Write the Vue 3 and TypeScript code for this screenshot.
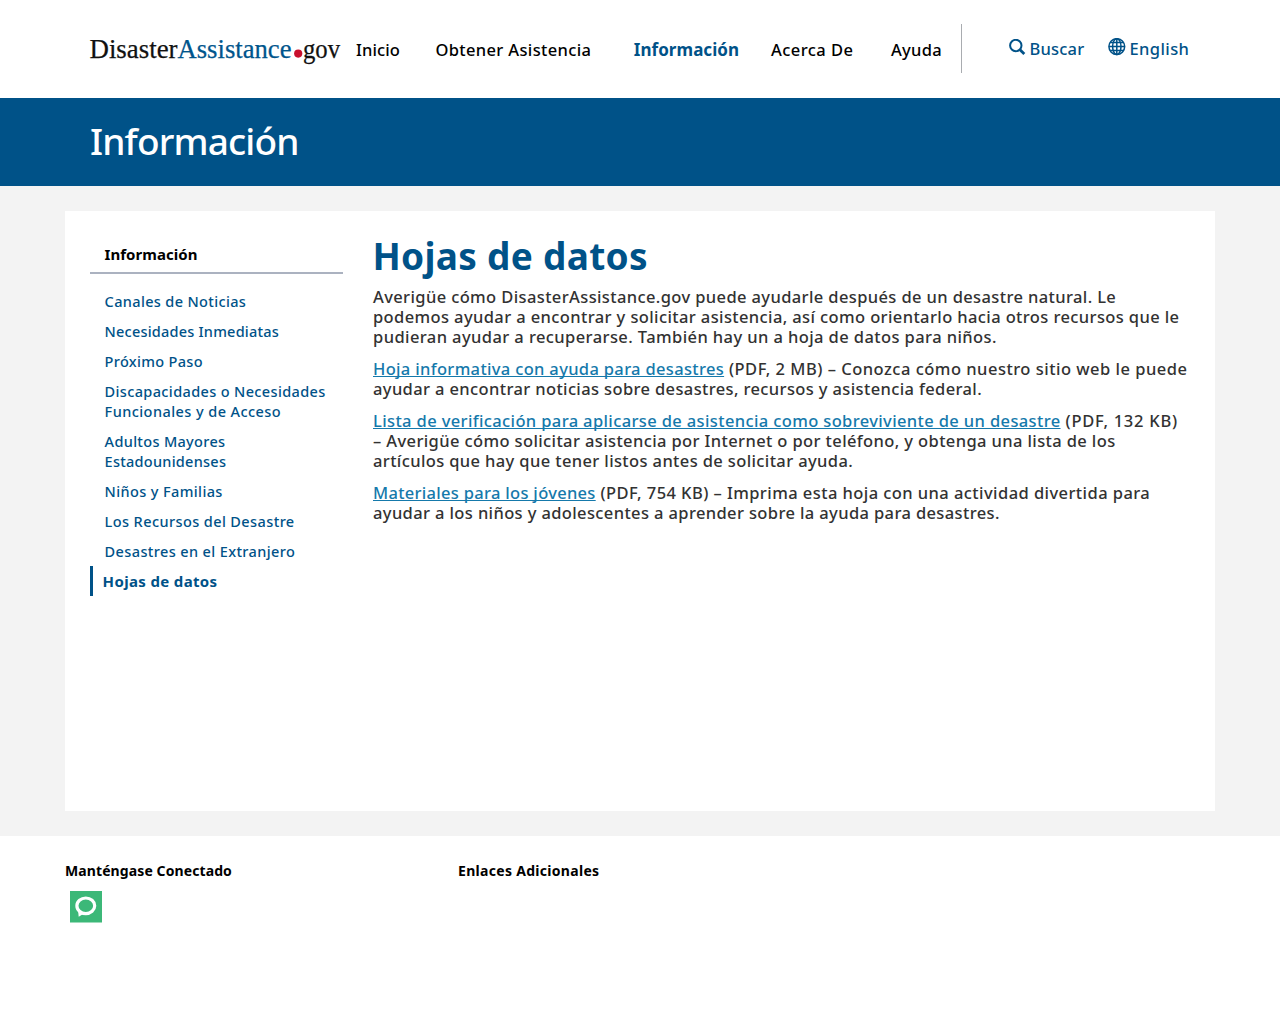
<script setup lang="ts">
interface Run {
  text: string
  tracking: number
  link?: boolean
}

const nav: { label: string; tracking: number; active?: boolean }[] = [
  { label: 'Inicio', tracking: 0.12 },
  { label: 'Obtener Asistencia', tracking: 0.35 },
  { label: 'Información', tracking: 0.05, active: true },
  { label: 'Acerca De', tracking: 0.45 },
  { label: 'Ayuda', tracking: 0.3 },
]

const side: { lines: Run[]; active?: boolean }[] = [
  { lines: [{ text: 'Canales de Noticias', tracking: 0.35 }] },
  { lines: [{ text: 'Necesidades Inmediatas', tracking: 0.21 }] },
  { lines: [{ text: 'Próximo Paso', tracking: 0.32 }] },
  {
    lines: [
      { text: 'Discapacidades o Necesidades', tracking: 0.36 },
      { text: 'Funcionales y de Acceso', tracking: 0.43 },
    ],
  },
  {
    lines: [
      { text: 'Adultos Mayores', tracking: 0.32 },
      { text: 'Estadounidenses', tracking: 0.26 },
    ],
  },
  { lines: [{ text: 'Niños y Familias', tracking: 0.38 }] },
  { lines: [{ text: 'Los Recursos del Desastre', tracking: 0.4 }] },
  { lines: [{ text: 'Desastres en el Extranjero', tracking: 0.38 }] },
  { lines: [{ text: 'Hojas de datos', tracking: 0.35 }], active: true },
]

const paragraphs: Run[][][] = [
  [
    [{ text: 'Averigüe cómo DisasterAssistance.gov puede ayudarle después de un desastre natural. Le', tracking: 0.38 }],
    [{ text: 'podemos ayudar a encontrar y solicitar asistencia, así como orientarlo hacia otros recursos que le', tracking: 0.385 }],
    [{ text: 'pudieran ayudar a recuperarse. También hay un a hoja de datos para niños.', tracking: 0.405 }],
  ],
  [
    [
      { text: 'Hoja informativa con ayuda para desastres', tracking: 0.33, link: true },
      { text: ' (PDF, 2 MB) – Conozca cómo nuestro sitio web le puede', tracking: 0.49 },
    ],
    [{ text: 'ayudar a encontrar noticias sobre desastres, recursos y asistencia federal.', tracking: 0.37 }],
  ],
  [
    [
      { text: 'Lista de verificación para aplicarse de asistencia como sobreviviente de un desastre', tracking: 0.37, link: true },
      { text: ' (PDF, 132 KB)', tracking: 0.73 },
    ],
    [{ text: '– Averigüe cómo solicitar asistencia por Internet o por teléfono, y obtenga una lista de los', tracking: 0.38 }],
    [{ text: 'artículos que hay que tener listos antes de solicitar ayuda.', tracking: 0.375 }],
  ],
  [
    [
      { text: 'Materiales para los jóvenes', tracking: 0.3, link: true },
      { text: ' (PDF, 754 KB) – Imprima esta hoja con una actividad divertida para', tracking: 0.43 },
    ],
    [{ text: 'ayudar a los niños y adolescentes a aprender sobre la ayuda para desastres.', tracking: 0.375 }],
  ],
]

const track = (n: number) => ({ letterSpacing: n + 'px' })
</script>

<template>
  <div class="page">
    <header class="header">
      <svg class="logo" width="252" height="36" viewBox="0 0 252 36">
        <text x="-0.5" y="26.7" textLength="88" lengthAdjust="spacingAndGlyphs">Disaster</text>
        <text x="87.5" y="26.7" textLength="114" lengthAdjust="spacingAndGlyphs" class="logo-blue">Assistance</text>
        <circle cx="208.2" cy="22.6" r="4.1" fill="#c8102e" />
        <text x="213" y="26.7" textLength="37" lengthAdjust="spacingAndGlyphs">gov</text>
      </svg>
      <nav class="nav">
        <a v-for="n in nav" :key="n.label" :class="{ on: n.active }" :style="track(n.tracking)">{{ n.label }}</a>
      </nav>
      <div class="tools">
        <a class="tool search">
          <svg width="17" height="17" viewBox="0 0 17 17">
            <circle cx="6.8" cy="6.5" r="5.7" fill="none" stroke="#005288" stroke-width="2" />
            <path d="M11 10.7L15.3 15" stroke="#005288" stroke-width="2.8" />
          </svg>
          <span>Buscar</span>
        </a>
        <a class="tool lang">
          <svg width="18" height="18" viewBox="0 0 18 18" fill="none" stroke="#005288" stroke-width="1.5">
            <circle cx="8.8" cy="8.6" r="7.9" />
            <ellipse cx="8.8" cy="8.6" rx="4.2" ry="7.9" />
            <path d="M8.8 0.8V16.4M1 8.6H16.6M2.2 4.6H15.4M2.2 12.6H15.4" />
          </svg>
          <span>English</span>
        </a>
      </div>
    </header>

    <div class="banner"><h2>Información</h2></div>

    <div class="body">
      <div class="card">
        <aside>
          <h3>Información</h3>
          <ul>
            <li v-for="(s, i) in side" :key="i" :class="{ current: s.active }">
              <div v-for="l in s.lines" :key="l.text" :style="track(l.tracking)">{{ l.text }}</div>
            </li>
          </ul>
        </aside>
        <main>
          <h1>Hojas de datos</h1>
          <p v-for="(p, i) in paragraphs" :key="i">
            <span v-for="(line, j) in p" :key="j" class="line">
              <component :is="r.link ? 'a' : 'span'" v-for="r in line" :key="r.text" :class="{ link: r.link }" :style="track(r.tracking)">{{ r.text }}</component>
            </span>
          </p>
        </main>
      </div>
    </div>

    <footer>
      <section class="connect">
        <h4>Manténgase Conectado</h4>
        <svg width="32" height="32" viewBox="0 0 32 32">
          <rect width="32" height="31.5" fill="#3cb878" />
          <path d="M8 18.5L8.7 25.8L14 22.4Z" fill="#fff" />
          <ellipse cx="15.8" cy="14.8" rx="8.9" ry="7.8" fill="#3cb878" stroke="#fff" stroke-width="3.2" />
        </svg>
      </section>
      <section><h4 class="extra">Enlaces Adicionales</h4></section>
    </footer>
  </div>
</template>

<style>
body { background: #fff; }
</style>

<style scoped>
.page {
  width: 1280px;
  font: 500 16.5px/20px "Noto Sans", "Open Sans", sans-serif;
  color: #000;
}
h1, h2, h3, h4, p, ul { margin: 0; padding: 0; }
.header {
  height: 98px;
  box-sizing: border-box;
  padding: 24px 65px 25px 90px;
  display: flex;
}
.logo { margin: 7px 14px 0 0; flex: none; overflow: visible; }
.logo text { font: 27px "Liberation Serif", serif; fill: #111; stroke: #111; stroke-width: 0.25px; }
.logo .logo-blue { fill: #00558c; stroke: #00558c; }
.nav {
  box-sizing: border-box;
  width: 606px;
  height: 49px;
  border-right: 1px solid #a9acb0;
  display: grid;
  grid-template-columns: 79.5px 198.3px 137.2px 120px auto;
  padding-top: 16px;
  white-space: nowrap;
}
.nav .on { color: #005288; font-weight: 700; font-size: 17px; }
.tools { display: flex; color: #005288; padding-top: 15px; height: 20px; }
.tool { display: flex; }
.tool svg { flex: none; }
.search { margin-left: 46.5px; width: 99px; letter-spacing: 0.2px; }
.search svg { margin-right: 4px; }
.lang { letter-spacing: 0.4px; }
.lang svg { margin: -1.5px 4px 0 0; }
.banner {
  height: 88px;
  box-sizing: border-box;
  padding: 20px 90px;
  background: #005288;
  color: #fff;
}
.banner h2 { font: 500 37px/45px "Noto Sans", sans-serif; letter-spacing: -0.85px; }
.body { background: #f3f3f3; padding: 25px 65px; }
.card {
  box-sizing: border-box;
  height: 600px;
  background: #fff;
  padding: 24px 25px;
  display: flex;
}
aside { width: 253px; margin-right: 30px; color: #005288; }
aside h3 {
  color: #000;
  font-size: 15px;
  line-height: 20px;
  padding: 9px 15px 8px 14.5px;
  border-bottom: 2px solid #abb2c0;
  letter-spacing: 0.05px;
}
ul { list-style: none; margin-top: 12px; font-size: 14.5px; white-space: nowrap; }
li { padding: 5px 10px 5px 14.6px; }
.current { border-left: 3px solid #005288; padding-left: 9.6px; font-weight: 700; font-size: 15px; }
main { flex: 1; color: #323232; white-space: nowrap; }
h1 { margin-left: -0.5px; color: #005288; font: 700 37px/40px "Noto Sans", sans-serif; letter-spacing: 0.3px; padding-top: 1px; margin-bottom: -1px; }
p { margin-top: 12px; }
.line { display: block; height: 20px; }
.line > span { white-space: pre; }
.link {
  color: #1579ab;
  text-decoration: underline 1px;
  text-underline-offset: 1px;
  text-decoration-skip-ink: none;
}
footer { display: flex; padding: 25px 65px 0; }
.connect { width: 393px; }
h4 { font-size: 14px; line-height: 20px; letter-spacing: 0.1px; }
.extra { letter-spacing: 0.3px; }
.connect svg { display: block; margin: 10px 0 0 5px; }
</style>
